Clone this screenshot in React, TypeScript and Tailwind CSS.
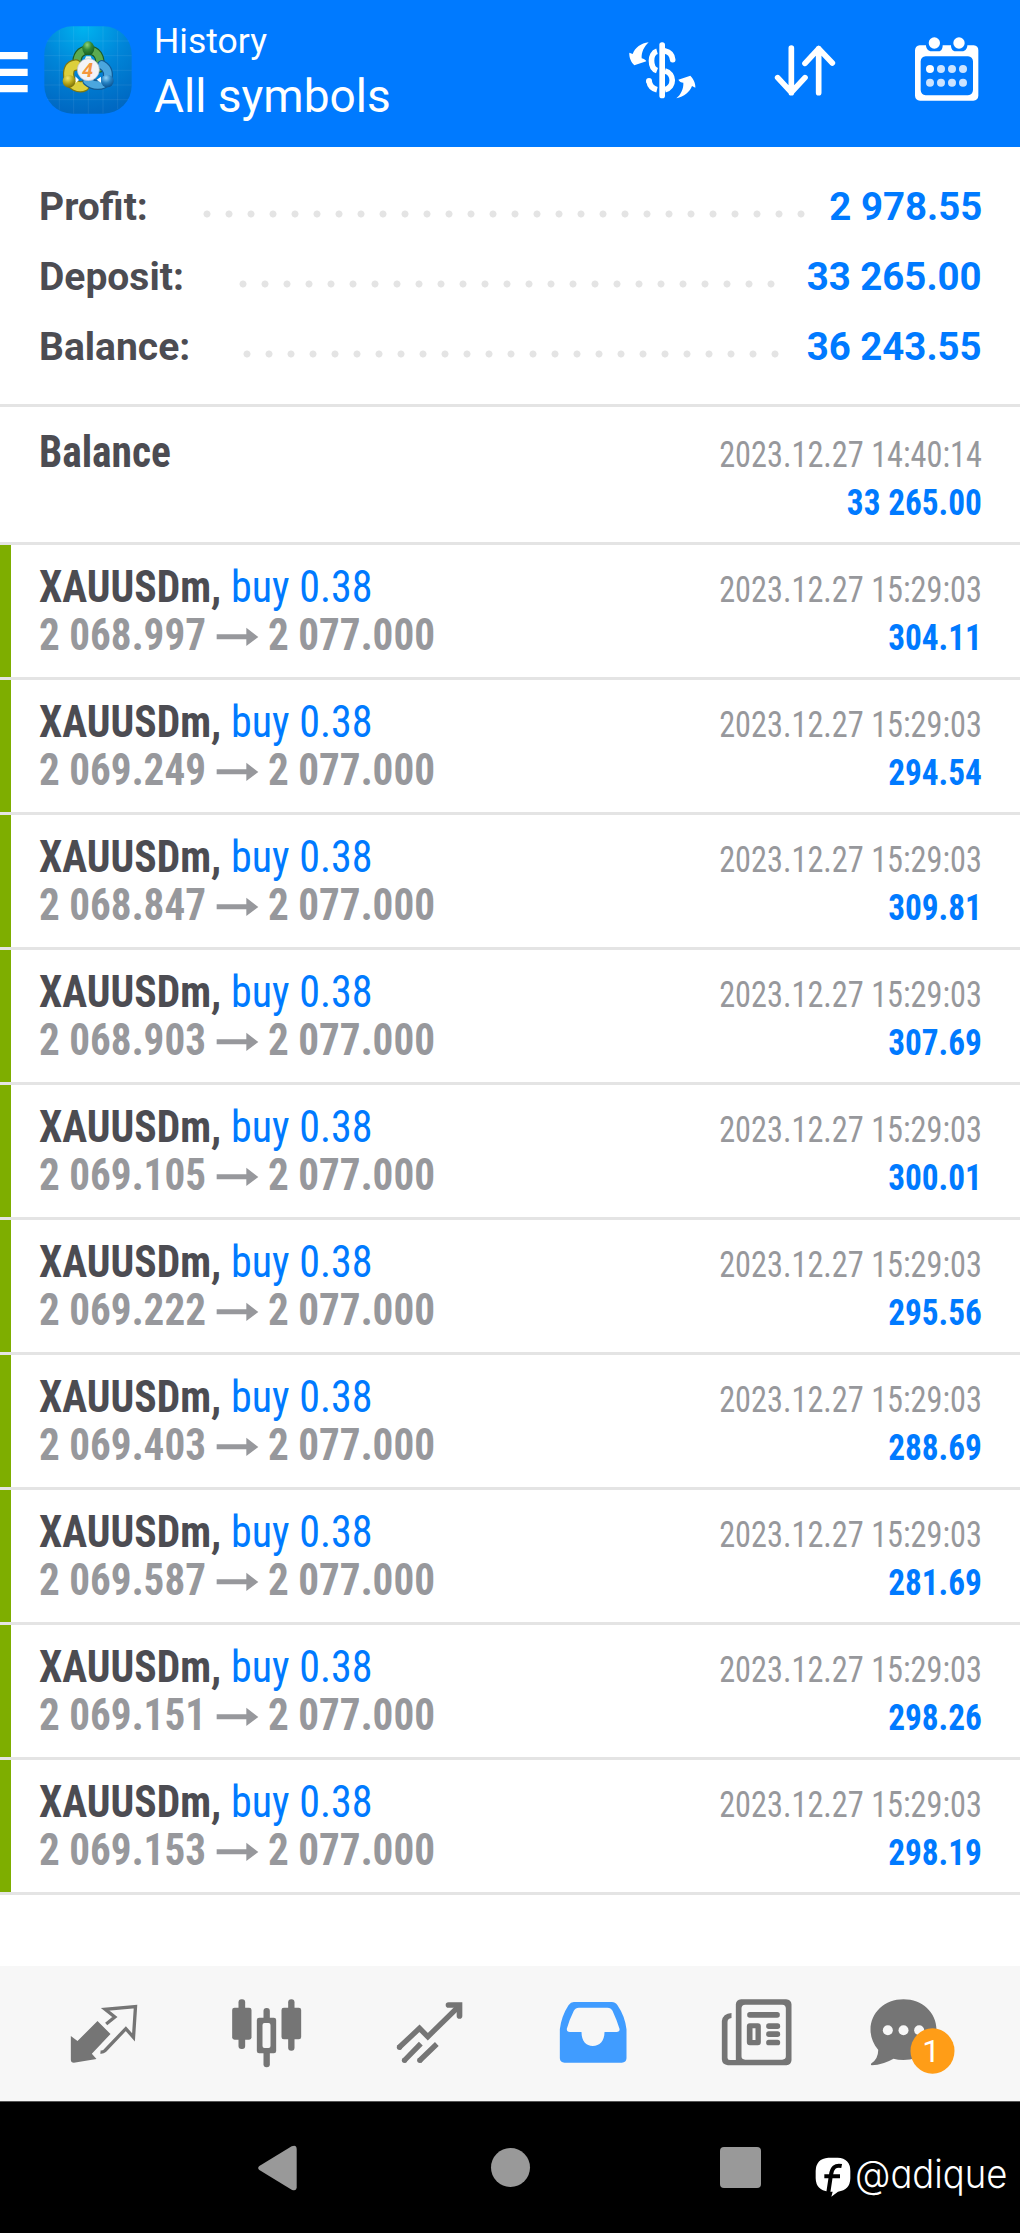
import React from "react";

const SUMMARY = [
  { label: "Profit:", value: "2 978.55", dots: "ml-[195.7px] w-[616px]" },
  { label: "Deposit:", value: "33 265.00", dots: "ml-[231.5px] w-[550px]" },
  { label: "Balance:", value: "36 243.55", dots: "ml-[236.3px] w-[550px]" },
];

const DEALS = [
  ["2 068.997", "304.11"],
  ["2 069.249", "294.54"],
  ["2 068.847", "309.81"],
  ["2 068.903", "307.69"],
  ["2 069.105", "300.01"],
  ["2 069.222", "295.56"],
  ["2 069.403", "288.69"],
  ["2 069.587", "281.69"],
  ["2 069.151", "298.26"],
  ["2 069.153", "298.19"],
];

const condensed = "font-['Roboto_Condensed','Roboto',sans-serif] [font-stretch:75%]";

function Logo() {
  return (
    <svg className="ml-4 mt-[26px] shrink-0" width="88" height="88" viewBox="132 79 264 264">
      <defs>
        <radialGradient id="tile" cx="0.45" cy="0" r="1">
          <stop offset="0" stopColor="#00b4f0" />
          <stop offset="0.5" stopColor="#0085d8" />
          <stop offset="1" stopColor="#0068c2" />
        </radialGradient>
        <radialGradient id="green" cx="0.4" cy="0.25" r="0.8">
          <stop offset="0" stopColor="#8fd47a" />
          <stop offset="0.45" stopColor="#338a38" />
          <stop offset="1" stopColor="#12581f" />
        </radialGradient>
        <radialGradient id="yellow" cx="0.4" cy="0.25" r="0.8">
          <stop offset="0" stopColor="#f2e66a" />
          <stop offset="0.5" stopColor="#b9a91c" />
          <stop offset="1" stopColor="#6f6508" />
        </radialGradient>
        <radialGradient id="blue" cx="0.4" cy="0.25" r="0.8">
          <stop offset="0" stopColor="#8fd2f7" />
          <stop offset="0.5" stopColor="#2682c4" />
          <stop offset="1" stopColor="#0a4f8c" />
        </radialGradient>
      </defs>
      <rect x="133" y="80" width="262" height="262" rx="84" fill="url(#tile)" />
      <g stroke="#ffffff" strokeOpacity="0.07" strokeWidth="3">
        <path d="M178 92V330M221 80V342M265 80V342M309 80V342M353 94V328" />
        <path d="M140 124H388M133 168H395M133 212H395M133 256H395M142 300H386" />
      </g>
      <g fill="none" strokeLinecap="round">
        <path d="M232 194C228 170 240 152 265 151C290 152 304 170 299 205" stroke="#1c5c26" strokeWidth="28" />
        <path d="M232 194C228 170 240 152 265 151C290 152 304 170 299 205" stroke="#5cab50" strokeWidth="21" />
        <path d="M228 196C208 198 202 214 208 238C216 256 236 266 252 259" stroke="#7d7610" strokeWidth="34" />
        <path d="M228 196C208 198 202 214 208 238C216 256 236 266 252 259" stroke="#dccf3c" strokeWidth="27" />
        <path d="M306 196C324 206 328 224 320 244C308 260 280 260 262 244" stroke="#125a94" strokeWidth="30" />
        <path d="M306 196C324 206 328 224 320 244C308 260 280 260 262 244" stroke="#4ba6de" strokeWidth="23" />
      </g>
      <path d="M226 230L237 241L227 250Z" fill="#fff" />
      <path d="M290 240L303 231V249Z" fill="#fff" />
      <path d="M258 170H272L276 180H254Z" fill="#e8f5e4" />
      <ellipse cx="265" cy="146" rx="18" ry="21" fill="url(#green)" />
      <circle cx="207" cy="245" r="19" fill="url(#yellow)" />
      <circle cx="322" cy="244" r="19" fill="url(#blue)" />
      <circle cx="265" cy="210" r="33" fill="#f3f3f6" stroke="#b9bcc6" strokeWidth="2" />
      <text x="263" y="231" textAnchor="middle" fontFamily="Roboto" fontWeight="700" fontStyle="italic" fontSize="60" fill="#f5973c">4</text>
    </svg>
  );
}

function Header() {
  return (
    <header className="flex h-[147px] items-start bg-[#007aff] text-white">
      <svg className="mt-[50px] shrink-0" width="28" height="44" viewBox="0 150 84 132">
        <path d="M0 156H83V178H0ZM0 206H83V228H0ZM0 255H83V277H0Z" fill="#fff" />
      </svg>
      <Logo />
      <div className="ml-[22px] mt-[20px] w-[473px] whitespace-nowrap">
        <div className="text-[35.5px] leading-[42px]">History</div>
        <div className="mt-[6px] text-[46px] leading-[56px]">All symbols</div>
      </div>
      <svg className="mt-[40px] shrink-0" width="70" height="60" viewBox="80 120 210 180" fill="#fff">
        <rect x="177" y="127" width="17" height="168" rx="8" />
        <g fill="none" stroke="#fff" strokeWidth="17">
          <path d="M170 154C148 160 148 204 170 212" />
          <path d="M194 153C207 156 216 166 217 179" strokeLinecap="round" />
          <path d="M146 243C148 256 157 266 170 269" />
          <path d="M194 213C223 220 223 262 194 269" />
        </g>
        <circle cx="146" cy="243" r="9" />
        <path d="M145 127C122 130 104 143 97 162L87 158C86 172 92 186 102 196L138 184C136 179 131 177 124 175C123 157 131 140 145 127Z" />
        <path d="M228 295C252 290 268 276 275 258L285 263C286 250 279 236 270 227L234 239C237 245 243 247 249 248C250 266 242 283 228 295Z" />
      </svg>
      <svg className="ml-[75px] mt-[40px] shrink-0" width="66" height="60" viewBox="516 120 198 180" fill="none" stroke="#fff" strokeWidth="17" strokeLinecap="round" strokeLinejoin="round">
        <path d="M574 144V278M533 233L574 277L615 233" />
        <path d="M656 278V146M615 190L656 146L697 189" />
      </svg>
      <svg className="ml-[74px] mt-[34px] shrink-0" width="70" height="70" viewBox="936 102 210 210" fill="#fff">
        <path fillRule="evenodd" d="M959 136H978C978 146 985 154 995 154H1016C1024 154 1028 146 1028 136H1053C1053 146 1057 154 1067 154H1086C1096 154 1102 146 1102 136H1121Q1135 138 1135 151V287Q1134 301 1120 302H960Q946 301 945 287V151Q946 138 959 136ZM977 169Q963 170 962 184V270Q963 285 977 286H1104Q1118 285 1119 270V184Q1118 170 1104 169Z" />
        <circle cx="1003" cy="129" r="17" />
        <circle cx="1077" cy="129" r="17" />
        <circle cx="990" cy="207" r="12" />
        <g fill="#cce4ff">
          <circle cx="1023" cy="207" r="12" />
          <circle cx="1056" cy="207" r="12" />
          <circle cx="1089" cy="207" r="12" />
          <circle cx="990" cy="248" r="12" />
          <circle cx="1023" cy="248" r="12" />
          <circle cx="1056" cy="248" r="12" />
          <circle cx="1089" cy="248" r="12" />
        </g>
      </svg>
    </header>
  );
}

function Summary() {
  return (
    <section className="h-[257px] pt-[25px] text-[39px] font-bold leading-[70px]">
      {SUMMARY.map((row) => (
        <div key={row.label} className="grid h-[70px]">
          <div className={`col-start-1 row-start-1 mt-[31px] h-[22px] bg-[radial-gradient(circle,#e4e4e4_3.1px,transparent_3.9px)] bg-[length:22px_22px] ${row.dots}`} />
          <div className="col-start-1 row-start-1 flex justify-between pl-[39px] pr-[38px]">
            <span className="text-[#4c4c52]">{row.label}</span>
            <span className="origin-right scale-x-[0.985] text-[#007aff]">{row.value}</span>
          </div>
        </div>
      ))}
    </section>
  );
}

function Arrow() {
  return (
    <svg className="mt-[3px] shrink-0" width="43" height="20" viewBox="649 686 129 60">
      <path d="M651 708H740V688L776 716L740 743V723H651Z" fill="#97989c" />
    </svg>
  );
}

function Row({ time, amount, children, bar }: { time: string; amount: string; children: React.ReactNode; bar?: boolean }) {
  return (
    <div className={bar ? "h-[135px]" : "h-[138px]"}>
      <div className="h-[3px] bg-[#e4e4e4]" />
      <div className={bar ? "flex h-[132px]" : "flex h-[135px] pt-[3px]"}>
        <div className={bar ? "w-[11px] bg-[#7eae00]" : "w-[11px]"} />
        <div className={`flex flex-1 justify-between whitespace-nowrap pl-[28px] pr-[38px] pt-[18px] ${condensed}`}>
          <div className="text-[44px] leading-[48px]">{children}</div>
          <div className="pt-[3px] text-right text-[36.5px] leading-[48px]">
            <div className="origin-right scale-x-[0.885] text-[#97989c]">{time}</div>
            <div className="origin-right scale-x-[0.912] font-bold text-[#007aff]">{amount}</div>
          </div>
        </div>
      </div>
    </div>
  );
}

function TabBar() {
  return (
    <nav className="flex h-[135px] bg-[#f7f7f7] pl-[22px] pt-[30px] text-[#757575]">
      <div className="flex w-[163px] justify-center">
        <svg width="100" height="80" viewBox="160.5 108 300 240" fill="currentColor">
          <path d="M211 228L231 243L291 183L330 222L274 281L288 297L220 308Q211 308 211 299Z" />
          <path d="M317 192L343 171L314 148L405 140L399 232L376 206L313 272Q307 277 300 276" fill="none" stroke="currentColor" strokeWidth="10" />
        </svg>
      </div>
      <div className="flex w-[163px] justify-center">
        <svg width="100" height="80" viewBox="649.5 108 300 240" fill="currentColor">
          <rect x="714" y="118" width="20" height="149" rx="9" />
          <rect x="695" y="143" width="58" height="96" rx="7" />
          <rect x="863" y="118" width="19" height="154" rx="9" />
          <rect x="843" y="143" width="59" height="95" rx="7" />
          <rect x="789" y="144" width="19" height="178" rx="9" />
          <rect x="769" y="173" width="58" height="107" rx="7" />
          <rect x="786" y="189" width="24" height="75" rx="6" fill="#f7f7f7" />
        </svg>
      </div>
      <div className="flex w-[163px] justify-center">
        <svg width="100" height="80" viewBox="1138.5 108 300 240" fill="none" stroke="currentColor" strokeWidth="16">
          <path d="M1194 264L1257 205L1282 230L1376 138" />
          <path d="M1344 135H1377V168" strokeWidth="17" strokeLinecap="round" />
          <path d="M1210 303L1261 251M1256 303L1309 252" />
          <g fill="currentColor" stroke="none">
            <circle cx="1197" cy="262" r="8" />
            <circle cx="1212" cy="301" r="8" />
            <circle cx="1258" cy="301" r="8" />
          </g>
        </svg>
      </div>
      <div className="flex w-[163px] justify-center">
        <svg width="100" height="80" viewBox="97.5 108 300 240">
          <path fill="#409cff" fillRule="evenodd" d="M190 126H304Q314 126 321 136Q343 168 348 208V295Q347 308 334 308H162Q149 308 148 295V208Q153 168 174 136Q181 126 190 126ZM205 143Q195 143 190 152Q176 180 169 206Q168 216 178 216H213C213 243 227 258 247 258C267 258 282 243 282 216H318Q329 216 327 206Q319 180 306 152Q301 143 291 143Z" />
        </svg>
      </div>
      <div className="flex w-[163px] justify-center">
        <svg width="100" height="80" viewBox="586.5 108 300 240" fill="currentColor">
          <path fillRule="evenodd" d="M692 118H827Q842 119 843 133V301Q842 315 828 316H652Q635 314 634 298V183Q637 161 663 159V174Q651 176 651 186V293Q651 300 658 300H676V133Q677 119 692 118ZM704 134Q693 135 693 145V289Q693 299 704 299H815Q826 299 826 289V145Q826 135 815 134Z" />
          <rect x="710" y="156" width="98" height="17" rx="8" />
          <path fillRule="evenodd" d="M718 190H742Q751 190 751 199V247Q751 256 742 256H718Q709 256 709 247V199Q709 190 718 190ZM726 205V240H735V205Z" />
          <rect x="767" y="190" width="42" height="17" rx="8" />
          <rect x="767" y="214" width="42" height="17" rx="8" />
          <rect x="767" y="239" width="42" height="17" rx="8" />
        </svg>
      </div>
      <div className="flex w-[163px] justify-center">
        <svg width="100" height="80" viewBox="1075.5 108 300 240" fill="currentColor">
          <path d="M1179 118C1235 118 1278 158 1278 209C1278 260 1235 300 1179 300Q1162 300 1149 296Q1118 314 1084 316Q1079 314 1083 310Q1104 295 1103 269C1088 252 1080 231 1080 209C1080 158 1123 118 1179 118Z" />
          <circle cx="1132" cy="211" r="15" fill="#f7f7f7" />
          <circle cx="1179" cy="211" r="15" fill="#f7f7f7" />
          <circle cx="1226" cy="211" r="15" fill="#f7f7f7" />
          <ellipse cx="1266" cy="273" rx="66" ry="68" fill="#ff9d17" />
          <text x="1262" y="306" textAnchor="middle" fontFamily="Roboto" fontSize="95" fill="#fff">1</text>
        </svg>
      </div>
    </nav>
  );
}

function SystemBar() {
  return (
    <footer className="flex h-[132px] items-start border-t border-[#555] bg-black">
      <svg className="ml-[257px] mt-[42px] shrink-0" width="42" height="48" viewBox="772 552 126 144">
        <path d="M779 618L876 559Q890 553 891 566V682Q890 695 876 689L779 630Q772 624 779 618Z" fill="#999" />
      </svg>
      <div className="ml-[192px] mt-[46px] size-[39px] shrink-0 rounded-full bg-[#999]" />
      <div className="ml-[190px] mt-[45px] size-[41px] shrink-0 rounded-[4px] bg-[#999]" />
      <div className="ml-[54px] mt-[50px] flex items-start whitespace-nowrap text-white">
        <svg className="mt-[5px] shrink-0" width="36" height="40" viewBox="915 592 108 120">
          <path d="M955 594H983Q1021 596 1021 634V656Q1020 692 984 696L964 711L968 696H955Q918 692 917 656V634Q918 597 955 594Z" fill="#fff" />
          <path d="M995 619C975 615 966 624 963 645L955 698M943 650H990" fill="none" stroke="#000" strokeWidth="12" />
        </svg>
        <span className="ml-[4px] w-[152px] origin-left scale-x-[0.935] font-['Inter'] text-[39px] font-[350] leading-[43px] [font-feature-settings:'cv11']">@adique</span>
      </div>
    </footer>
  );
}

export default function App() {
  return (
    <div className="flex h-[2233px] w-[1020px] flex-col overflow-hidden bg-white font-['Roboto',sans-serif]">
      <Header />
      <Summary />
      <main className="flex-1">
        <Row time="2023.12.27 14:40:14" amount="33 265.00">
          <span className="inline-block origin-left scale-x-[0.94] font-bold text-[#4c4c52]">Balance</span>
        </Row>
        {DEALS.map(([open, profit]) => (
          <Row key={open} time="2023.12.27 15:29:03" amount={profit} bar>
            <div className="flex">
              <span className="w-[192px] origin-left scale-x-[0.945] font-bold text-[#4c4c52]">XAUUSDm,</span>
              <span className="origin-left scale-x-[0.955] text-[#007aff]">buy 0.38</span>
            </div>
            <div className="flex items-center font-bold text-[#97989c]">
              <span className="w-[177px] origin-left scale-x-[0.935]">{open}</span>
              <Arrow />
              <span className="ml-[9px] origin-left scale-x-[0.935]">2 077.000</span>
            </div>
          </Row>
        ))}
        <div className="h-[3px] bg-[#e4e4e4]" />
      </main>
      <TabBar />
      <SystemBar />
    </div>
  );
}
